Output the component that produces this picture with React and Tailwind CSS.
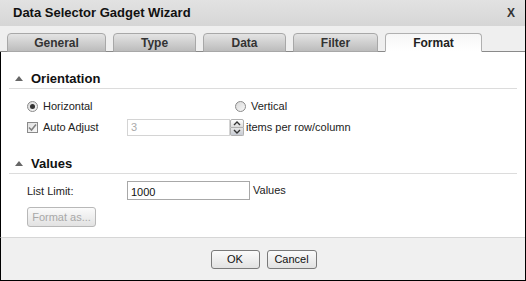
import React from 'react';

const tabs = [
    { name: 'General', w: 'w-[99px]' },
    { name: 'Type', w: 'w-[83px]' },
    { name: 'Data', w: 'w-[83px]' },
    { name: 'Filter', w: 'w-[85px]' },
    { name: 'Format', w: 'w-[97px]', active: true },
];

const SectionHeader = ({ title }) => (
    <div className="flex items-center h-[20px] mx-[8px] border-b border-[#dcdcdc]">
        <span className="w-0 h-0 ml-[6px] mr-[8px] border-l-[4px] border-r-[4px] border-b-[5px] border-l-transparent border-r-transparent border-b-[#666]" />
        <span className="text-[13px] font-bold text-[#111]">{title}</span>
    </div>
);

const Radio = ({ checked }) => (
    <span className="w-[11px] h-[11px] rounded-full border border-[#8a8a8a] bg-gradient-to-br from-[#d8d8d8] to-[#f8f8f8] flex items-center justify-center">
        {checked && <span className="w-[5px] h-[5px] rounded-full bg-[#333]" />}
    </span>
);

const Checkbox = () => (
    <span className="w-[11px] h-[11px] border border-[#8a8a8a] bg-gradient-to-br from-[#e0e0e0] to-[#fafafa] flex items-center justify-center">
        <svg width="9" height="9" viewBox="0 0 9 9">
            <path d="M1 4.5 L3.5 7 L8 1.5" fill="none" stroke="#808080" strokeWidth="1.6" />
        </svg>
    </span>
);

const Button = ({ children, w, h, disabled }) => (
    <button
        className={`${w} ${h} rounded-[3px] border ${disabled ? 'border-[#b8b8b8] text-[#a8a8a8]' : 'border-[#7a7a7a] text-[#111]'} bg-gradient-to-b from-[#fbfbfb] to-[#e2e2e2] text-[11px] leading-none flex items-center justify-center`}
    >
        {children}
    </button>
);

export default function App() {
    return (
        <div className="w-[526px] h-[281px] flex flex-col border-r border-b border-black bg-white font-['Liberation_Sans',Arial,sans-serif] text-[11px] text-[#222]">
            <div className="h-[26px] flex items-center justify-between pl-[13px] pr-[10px] bg-gradient-to-b from-[#e2e2e2] to-[#d6d6d6]">
                <span className="text-[13px] font-bold text-[#111]">Data Selector Gadget Wizard</span>
                <span className="text-[12px] font-bold text-[#333]">X</span>
            </div>

            <div className="h-[26px] flex items-end gap-[7px] pl-[7px] bg-[#efefef] border-b border-[#8a8a8a]">
                {tabs.map((t) => (
                    <div
                        key={t.name}
                        className={`${t.w} h-[19px] -mb-px flex items-center justify-center rounded-t-[4px] border text-[12px] font-bold ${
                            t.active
                                ? 'border-[#b0b0b0] border-b-white bg-gradient-to-b from-[#f6f6f6] to-white text-[#222]'
                                : 'border-[#a8a8a8] bg-gradient-to-b from-[#e4e4e4] to-[#bcbcbc] text-[#333]'
                        }`}
                    >
                        {t.name}
                    </div>
                ))}
            </div>

            <div className="flex-1 flex flex-col border-l border-black">
                <div className="pt-[17px]">
                    <SectionHeader title="Orientation" />
                </div>
                <div className="flex items-center h-[18px] mt-[8px] pl-[26px]">
                    <Radio checked />
                    <span className="ml-[5px] w-[192px]">Horizontal</span>
                    <Radio />
                    <span className="ml-[5px]">Vertical</span>
                </div>
                <div className="flex items-center h-[18px] mt-[3px] pl-[26px]">
                    <Checkbox />
                    <span className="ml-[5px] w-[84px]">Auto Adjust</span>
                    <div className="w-[103px] h-[17px] border border-[#d4d4d4] bg-white text-[#aaa] pl-[3px] flex items-center">3</div>
                    <div className="flex flex-col w-[14px] h-[17px]">
                        <div className="flex-1 border border-[#b0b0b0] rounded-t-[2px] bg-gradient-to-b from-white to-[#dcdcdc] flex items-center justify-center">
                            <svg width="8" height="5" viewBox="0 0 8 5"><path d="M1 4 L4 1 L7 4" fill="none" stroke="#333" strokeWidth="1.4" /></svg>
                        </div>
                        <div className="flex-1 border border-t-0 border-[#b0b0b0] rounded-b-[2px] bg-gradient-to-b from-[#e6e6e6] to-[#c8ccd4] flex items-center justify-center">
                            <svg width="8" height="5" viewBox="0 0 8 5"><path d="M1 1 L4 4 L7 1" fill="none" stroke="#333" strokeWidth="1.4" /></svg>
                        </div>
                    </div>
                    <span className="ml-[2px]">items per row/column</span>
                </div>

                <div className="pt-[18px]">
                    <SectionHeader title="Values" />
                </div>
                <div className="flex items-start mt-[7px] pl-[26px]">
                    <span className="w-[100px] pt-[2px]">List Limit:</span>
                    <div className="w-[123px] h-[19px] border border-[#a8a8a8] bg-white pl-[3px] pt-[5px] leading-none text-[#111]">1000</div>
                    <span className="ml-[3px] pt-[4px] leading-none">Values</span>
                </div>
                <div className="pl-[26px] mt-[7px]">
                    <Button w="w-[69px]" h="h-[20px]" disabled>Format as...</Button>
                </div>
            </div>

            <div className="h-[43px] flex items-center justify-center gap-[7px] pl-[1px] border-l border-black border-t border-t-[#d6d6d6] bg-[#f0f0f0]">
                <Button w="w-[49px]" h="h-[19px]">OK</Button>
                <Button w="w-[50px]" h="h-[19px]">Cancel</Button>
            </div>
        </div>
    );
}
